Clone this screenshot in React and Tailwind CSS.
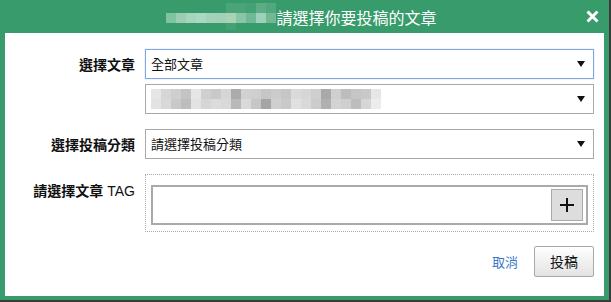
import React from "react";

const titleBlur = ["#7fc3a3", "#9ccdb2", "#a6d4bd", "#a9d8c3", "#a3d2bc", "#a5d0b8", "#a9d3b3", "#89c6a8", "#6fb994", "#9dd1bd", "#74b892"];
const selectBlurTop = ["#e6e6e6", "#d6d6d6", "#cfcfcf", "#c4c4c4", "#e6e6e6", "#cfcfcf", "#c9c9c9", "#d6d6d6", "#ababab", "#d1d1d1", "#cfcfcf", "#c6c6c6", "#cccccc", "#c6c6c6", "#dadada", "#d6d6d6", "#cfcfcf", "#a9a9a9", "#cfcfcf", "#bdbdbd", "#c6c6c6", "#c9c9c9", "#e6e6e6"];
const selectBlurBot = ["#e3e3e3", "#d9d9d9", "#c9c9c9", "#bdbdbd", "#e3e3e3", "#d6d6d6", "#dcdcdc", "#d9d9d9", "#b9b9b9", "#d9d9d9", "#c6c6c6", "#a5a5a5", "#cfcfcf", "#c9c9c9", "#e0e0e0", "#d9d9d9", "#cccccc", "#b0b0b0", "#d3d3d3", "#cfcfcf", "#bdbdbd", "#d6d6d6", "#ececec"];

function Arrow() {
  return (
    <svg width="8" height="6" viewBox="0 0 8 6" className="shrink-0">
      <path d="M0 0H8L4 6Z" fill="#111" />
    </svg>
  );
}

function Select({ focused, children }) {
  return (
    <div
      className={`flex-1 h-[30px] flex items-center justify-between pl-[5px] pr-[8px] bg-white border ${
        focused ? "border-[#82a7e2] shadow-[0_0_1px_#9dbdf0]" : "border-[#a9a9a9]"
      }`}
    >
      <div className="flex items-center text-[13px] text-[#111]">{children}</div>
      <Arrow />
    </div>
  );
}

export default function App() {
  return (
    <div
      className="w-[611px] h-[302px] bg-[#3b3b3b] overflow-hidden"
      style={{ fontFamily: '"Noto Sans CJK TC", "Liberation Sans", sans-serif' }}
    >
      <div className="w-[609px] h-[300px] bg-[#389b6b] flex flex-col">
        {/* header */}
        <div className="h-[33px] flex items-center relative">
          <div className="flex-1 flex items-center justify-center pr-[6px]">
            <div className="flex flex-col">
              <div className="h-[10px] flex">
                <div className="w-[60px]" />
                <div className="w-[20px] bg-[#4aa47a]" />
                <div className="w-[10px] bg-[#44a176]" />
                <div className="w-[10px] bg-[#5cad85]" />
                <div className="w-[10px] bg-[#52a87e]" />
              </div>
              <div className="h-[10px] flex">
                {titleBlur.map((c, i) => (
                  <div key={i} className="w-[10px]" style={{ background: c }} />
                ))}
              </div>
              <div className="h-[7px] flex">
                <div className="w-[60px]" />
                <div className="w-[10px] bg-[#44a176]" />
              </div>
            </div>
            <span className="text-white text-[16px] leading-none">請選擇你要投稿的文章</span>
          </div>
          <svg
            width="13"
            height="13"
            viewBox="0 0 13 13"
            className="absolute left-[586px] top-[10px]"
          >
            <path d="M1.5 1.5L11.5 11.5M11.5 1.5L1.5 11.5" stroke="#fff" strokeWidth="3" />
          </svg>
        </div>

        {/* body */}
        <div className="mx-[5px] h-[263px] bg-white pt-[16px] pr-[10px] text-[#111]">
          <div className="flex items-center">
            <div className="w-[140px] pr-[10px] text-right text-[14px] font-bold">選擇文章</div>
            <Select focused>全部文章</Select>
          </div>
          <div className="flex items-center mt-[5px]">
            <div className="w-[140px]" />
            <Select>
              <div className="flex flex-col">
                <div className="flex h-[10px]">
                  {selectBlurTop.map((c, i) => (
                    <div key={i} className="w-[10px]" style={{ background: c }} />
                  ))}
                </div>
                <div className="flex h-[10px]">
                  {selectBlurBot.map((c, i) => (
                    <div key={i} className="w-[10px]" style={{ background: c }} />
                  ))}
                </div>
              </div>
            </Select>
          </div>
          <div className="flex items-center mt-[15px]">
            <div className="w-[140px] pr-[10px] text-right text-[14px] font-bold">選擇投稿分類</div>
            <Select>請選擇投稿分類</Select>
          </div>
          <div className="flex items-start mt-[15px]">
            <div className="w-[140px] pr-[10px] text-right text-[14px] pt-[6px]">
              <span className="font-bold">請選擇文章</span>
              <span className="ml-[4px]" style={{ fontFamily: '"Liberation Sans", sans-serif' }}>
                TAG
              </span>
            </div>
            <div className="flex-1 h-[58px] border border-dotted border-[#aaa] px-[5px] pt-[10px]">
              <div className="h-[40px] border-2 border-[#aaa] flex items-center justify-end pr-[3px]">
                <div className="w-[32px] h-[32px] bg-[#ddd] border border-[#aaa] flex items-center justify-center">
                  <svg width="14" height="14" viewBox="0 0 14 14">
                    <path d="M7 0V14M0 7H14" stroke="#111" strokeWidth="2" />
                  </svg>
                </div>
              </div>
            </div>
          </div>
          <div className="flex items-center justify-end mt-[14px] gap-[16px]">
            <span className="text-[13px] text-[#3a78c9]">取消</span>
            <div className="w-[60px] h-[31px] border border-[#a9a9a9] rounded-[2px] bg-gradient-to-b from-white to-[#e3e3e3] flex items-center justify-center text-[14px]">
              投稿
            </div>
          </div>
        </div>
      </div>
    </div>
  );
}
